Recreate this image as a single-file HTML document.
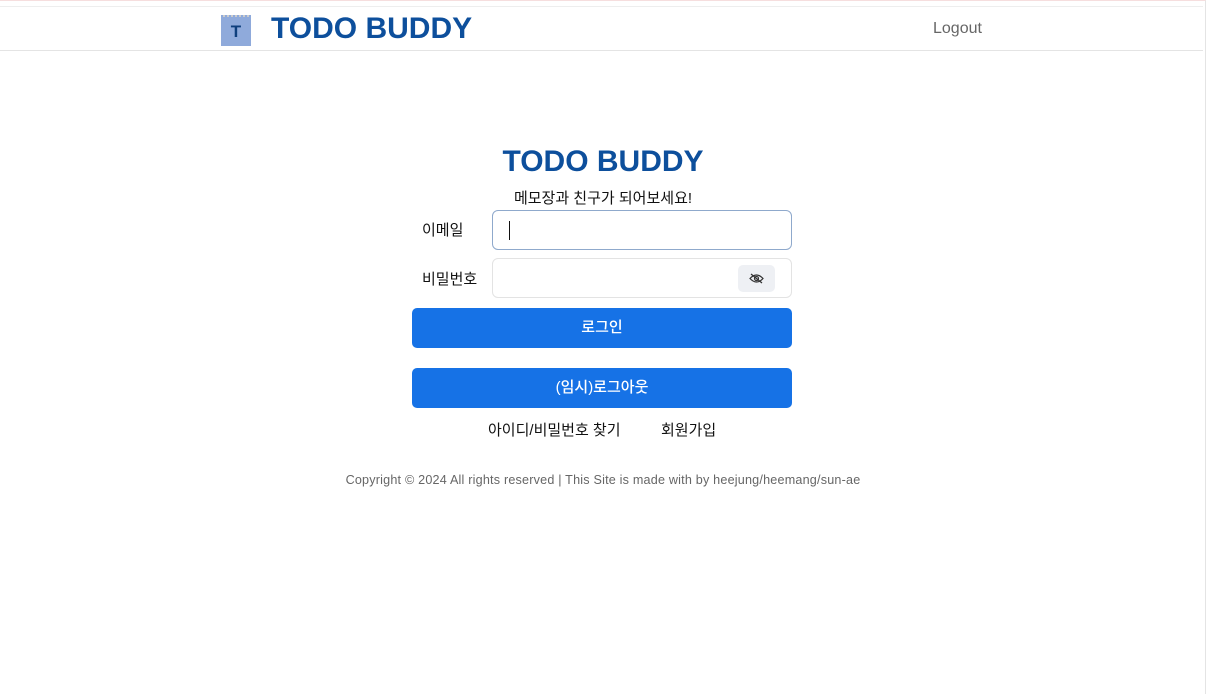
<!DOCTYPE html>
<html><head><meta charset="utf-8"><style>
*{box-sizing:border-box;margin:0;padding:0}
body{width:1206px;height:694px;background:#fff;font-family:"Liberation Sans","Noto Sans CJK KR",sans-serif;position:relative;overflow:hidden;border-top:1px solid #f6dede;border-right:1px solid #e4e4e4}
.hdr{position:absolute;left:0;top:5px;width:1203px;height:45px;border-top:1px solid #eee;border-bottom:1px solid #e4e4e4}
.logo{position:absolute;left:221px;top:14px;width:30px;height:31px;background:#8faadb;color:#0f3f7d;font-weight:bold;font-size:17px;text-align:center;line-height:33px}
.logo:before{content:"";position:absolute;left:2px;top:0;width:26px;height:3px;border-top:2px dotted #ccc}
.brand{position:absolute;left:271px;top:11px;font-size:30px;font-weight:bold;color:#0d4f9c}
.logout{position:absolute;left:933px;top:19px;font-size:16px;color:#666}
.t{position:absolute;left:0;width:1206px;text-align:center}
.title{top:144px;font-size:30px;font-weight:bold;color:#0d4f9c;left:0}
.sub{top:186px;font-size:15px;color:#111}
.lbl{position:absolute;left:422px;font-size:15px;color:#111}
.inp{position:absolute;left:492px;width:300px;height:40px;border-radius:6px;border:1px solid #e3e3e3}
.btn{position:absolute;left:412px;width:380px;height:40px;border-radius:5px;background:#1672e6;color:#fff;font-size:15px;text-align:center;line-height:40px;font-weight:500}
</style></head><body>
<div class="hdr"></div>
<div class="logo">T</div>
<div class="brand">TODO BUDDY</div>
<div class="logout">Logout</div>
<div class="t title">TODO BUDDY</div>
<div class="t sub">메모장과 친구가 되어보세요!</div>
<div class="lbl" style="top:218px">이메일</div>
<div class="inp" style="top:209px;border:1.5px solid #8fa9cc"><div style="position:absolute;left:16px;top:10px;width:1px;height:19px;background:#111"></div></div>
<div class="lbl" style="top:267px">비밀번호</div>
<div class="inp" style="top:257px"><div style="position:absolute;right:16px;top:6px;width:37px;height:27px;background:#eef0f4;border-radius:5px">
<svg width="37" height="27" viewBox="0 0 37 27"><path d="M12 13.5q6.5-7 13 0q-6.5 7-13 0z" fill="none" stroke="#333" stroke-width="1.2"/><circle cx="18.5" cy="13.5" r="2" fill="none" stroke="#333" stroke-width="1.2"/><line x1="13" y1="9" x2="24" y2="18" stroke="#333" stroke-width="1.2"/></svg></div></div>
<div class="btn" style="top:307px">로그인</div>
<div class="btn" style="top:367px">(임시)로그아웃</div>
<div style="position:absolute;left:488px;top:418px;font-size:15px;color:#111">아이디/비밀번호 찾기</div>
<div style="position:absolute;left:661px;top:418px;font-size:15px;color:#111">회원가입</div>
<div class="t" style="top:472px;font-size:12.6px;letter-spacing:0.2px;color:#666">Copyright © 2024 All rights reserved | This Site is made with by heejung/heemang/sun-ae</div>
</body></html>
